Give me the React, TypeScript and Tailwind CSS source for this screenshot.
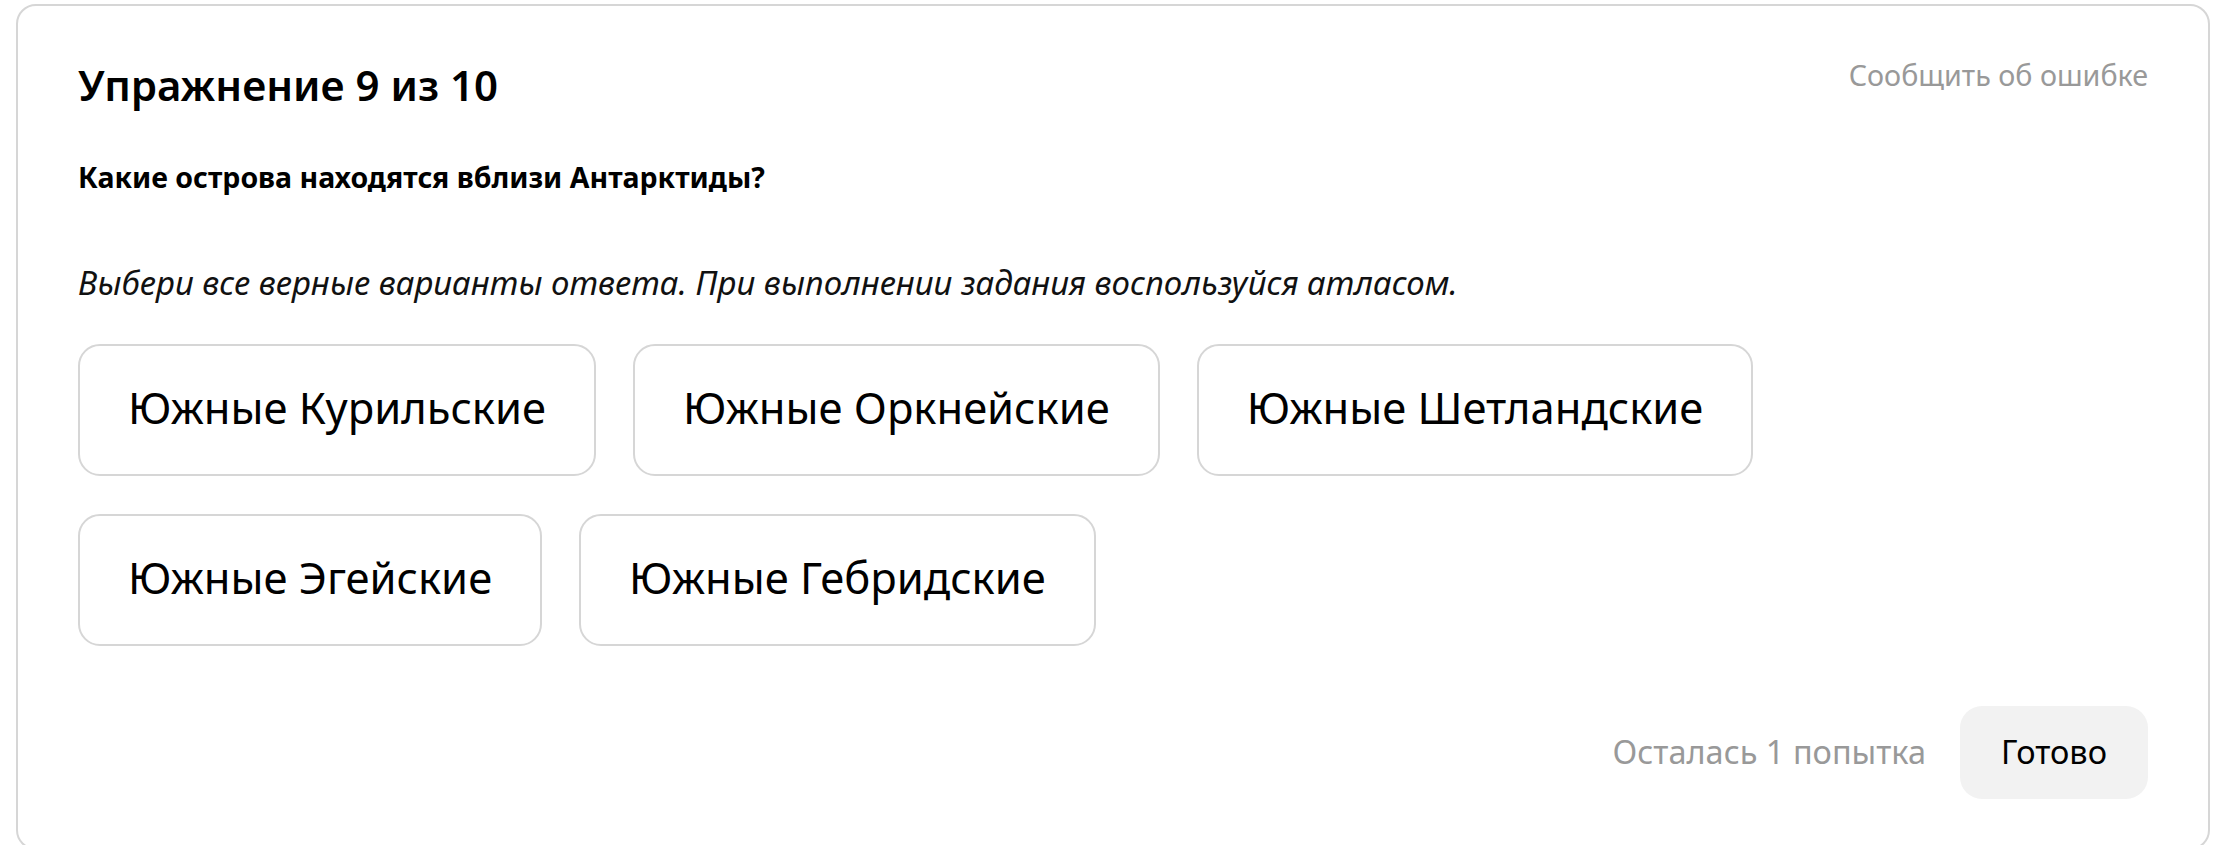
import React from 'react';

const options = [
  ['Южные Курильские', 'Южные Оркнейские', 'Южные Шетландские'],
  ['Южные Эгейские', 'Южные Гебридские'],
];

export default function App() {
  return (
    <div className="min-h-screen bg-white px-[16px] pt-[4px]" style={{ fontFamily: '"Noto Sans", "Open Sans", sans-serif' }}>
      <div className="h-[846px] rounded-[20px] border-2 border-[#d6d6d6] bg-white pl-[60px] pr-[60px] pt-[53px]">
        <div className="flex items-start justify-between">
          <h1 className="text-[42px] leading-[52px] font-semibold text-black">Упражнение 9 из 10</h1>
          <button className="mt-[-4px] text-[28.7px] leading-[40px] text-[#999999]">Сообщить об ошибке</button>
        </div>

        <p className="mt-[48px] text-[28.5px] leading-[36px] font-bold text-black">
          Какие острова находятся вблизи Антарктиды?
        </p>

        <p className="mt-[66px] text-[33px] leading-[44px] italic text-[#111111]">
          Выбери все верные варианты ответа. При выполнении задания воспользуйся атласом.
        </p>

        <div className="mt-[39px] flex flex-col gap-[38px]">
          {options.map((row, i) => (
            <div key={i} className="flex gap-[37px]">
              {row.map((label) => (
                <button
                  key={label}
                  className="h-[132px] rounded-[22px] border-2 border-[#d6d6d6] bg-white px-[48px] pb-[4px] text-[43.5px] text-black"
                >
                  {label}
                </button>
              ))}
            </div>
          ))}
        </div>

        <div className="mt-[60px] flex items-center justify-end gap-[34px]">
          <span className="text-[32.5px] text-[#999999]">Осталась 1 попытка</span>
          <button className="h-[93px] rounded-[22px] bg-[#f2f2f2] px-[41px] text-[32.5px] text-black">Готово</button>
        </div>
      </div>
    </div>
  );
}
